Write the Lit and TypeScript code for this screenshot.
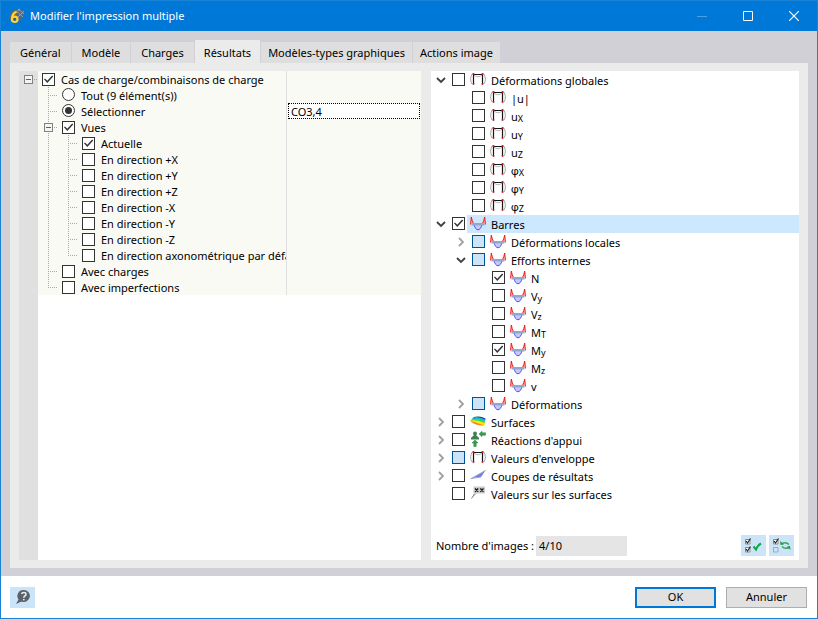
import { LitElement, html, svg, css, nothing } from "lit";
import { customElement } from "lit/decorators.js";
import { classMap } from "lit/directives/class-map.js";

type Guide = "blank" | "line" | "tee" | "end" | "root" | "branch";
type OptionRow = {
  label: string;
  guides: Guide[];
  kind?: "radio";
  checked?: boolean;
  value?: string;
};
type IconName = "frame" | "moment" | "surface" | "support" | "section" | "values";
type ResultRow = {
  label: string;
  sub?: string;
  level: number;
  icon: IconName;
  arrow?: "open" | "closed";
  state?: "on" | "partial";
  selected?: boolean;
};

const view = (label: string, last = false, checked = false): OptionRow => ({
  label,
  checked,
  guides: ["blank", "line", last ? "end" : "tee"],
});

const OPTIONS: OptionRow[] = [
  { label: "Cas de charge/combinaisons de charge", guides: ["root"], checked: true },
  { label: "Tout (9 élément(s))", guides: ["blank", "tee"], kind: "radio" },
  { label: "Sélectionner", guides: ["blank", "tee"], kind: "radio", checked: true, value: "CO3,4" },
  { label: "Vues", guides: ["blank", "branch"], checked: true },
  view("Actuelle", false, true),
  view("En direction +X"),
  view("En direction +Y"),
  view("En direction +Z"),
  view("En direction -X"),
  view("En direction -Y"),
  view("En direction -Z"),
  view("En direction axonométrique par défaut", true),
  { label: "Avec charges", guides: ["blank", "tee"] },
  { label: "Avec imperfections", guides: ["blank", "end"] },
];

const RESULTS: ResultRow[] = [
  { label: "Déformations globales", level: 0, icon: "frame", arrow: "open" },
  { label: "|u|", level: 1, icon: "frame" },
  { label: "u", sub: "X", level: 1, icon: "frame" },
  { label: "u", sub: "Y", level: 1, icon: "frame" },
  { label: "u", sub: "Z", level: 1, icon: "frame" },
  { label: "φ", sub: "X", level: 1, icon: "frame" },
  { label: "φ", sub: "Y", level: 1, icon: "frame" },
  { label: "φ", sub: "Z", level: 1, icon: "frame" },
  { label: "Barres", level: 0, icon: "moment", arrow: "open", state: "on", selected: true },
  { label: "Déformations locales", level: 1, icon: "moment", arrow: "closed", state: "partial" },
  { label: "Efforts internes", level: 1, icon: "moment", arrow: "open", state: "partial" },
  { label: "N", level: 2, icon: "moment", state: "on" },
  { label: "V", sub: "y", level: 2, icon: "moment" },
  { label: "V", sub: "z", level: 2, icon: "moment" },
  { label: "M", sub: "T", level: 2, icon: "moment" },
  { label: "M", sub: "y", level: 2, icon: "moment", state: "on" },
  { label: "M", sub: "z", level: 2, icon: "moment" },
  { label: "v", level: 2, icon: "moment" },
  { label: "Déformations", level: 1, icon: "moment", arrow: "closed", state: "partial" },
  { label: "Surfaces", level: 0, icon: "surface", arrow: "closed" },
  { label: "Réactions d'appui", level: 0, icon: "support", arrow: "closed" },
  { label: "Valeurs d'enveloppe", level: 0, icon: "frame", arrow: "closed", state: "partial" },
  { label: "Coupes de résultats", level: 0, icon: "section", arrow: "closed" },
  { label: "Valeurs sur les surfaces", level: 0, icon: "values" },
];

const TABS = ["Général", "Modèle", "Charges", "Résultats", "Modèles-types graphiques", "Actions image"];

const ICONS: Record<IconName, unknown> = {
  frame: svg`
    <path d="M2.500 2.500Q-1 8 2 13M13.500 2.500Q17 8 14 13" fill="none" stroke="#a6a6a6"/>
    <path d="M4 4Q8 7.500 12 4" fill="none" stroke="#b8b8b8"/>
    <path d="M3.500 13V3.500H12.500V13" fill="none" stroke="#161616" stroke-width="1.200"/>
    <g fill="#c81e28"><circle cx="3.500" cy="3" r="1.100"/><circle cx="12.500" cy="3" r="1.100"/><circle cx="3.500" cy="13" r="1"/><circle cx="12.500" cy="13" r="1"/></g>`,
  moment: svg`
    <path d="M4 9.500C5.500 16.500 10.500 16.500 12 9.500Z" fill="#c8c8fc" stroke="#5050ff"/>
    <path d="M.5 8.500L1.300 2L3.500 8.500ZM15.500 8.500L14.700 2L12.500 8.500Z" fill="#ffc0c0"/>
    <path d="M.6 9.500L1.300 2Q2 6 3.500 8.500M15.400 9.500L14.700 2Q14 6 12.500 8.500" fill="none" stroke="#f01818"/>
    <path d="M1.500 8H14.500V10.500H1.500Z" fill="#8fa9c9"/>`,
  surface: svg`
    <path d="M0 8L4 4Q10 2.500 15.500 5.500L14.500 12.500Q8 12.500 0 8Z" fill="#ffe600"/>
    <path d="M4 4Q10 2.500 15.500 5.500L15.200 7Q9 3.500 2.800 5Z" fill="#1438d8"/>
    <path d="M2.800 5Q9 3.500 15.200 7L14.900 8.500Q8 5 1.600 6.400Z" fill="#00b4f0"/>
    <path d="M1.600 6.400Q8 5 14.900 8.500L14.500 10Q8 6.500 .8 7.400Z" fill="#28dc50"/>
    <path d="M0 8Q4 8.500 8.500 10.500L14.500 12.500Q6 13 0 8Z" fill="#ff7a28"/>`,
  support: svg`
    <g fill="#3c8250"><circle cx="5" cy="2.500" r="2"/><path d="M5 3L9 7H1ZM1 6.500H9V8.500H1Z"/></g>
    <path d="M9 3L12 .3V1.800H15.500V4.200H12V5.700ZM5 9L8 12H6.200V15.500H3.800V12H2Z" fill="#2fa34a" stroke="#27803c" stroke-width=".5"/>`,
  section: svg`
    <path d="M2 11L15.500 3.500L11 10Z" fill="#7676f4"/>
    <path d="M.5 12L15.500 3.500M1 11.500L11 10" fill="none" stroke="#9aa4c4"/>`,
  values: svg`
    <path d="M3.500 1.500H15V8.500H7L2 13L4 8.500H3.500Z" fill="#cacaca"/>
    <path d="M5 3.500L8.200 6.700M8.200 3.500L5 6.700M10.300 3.500L13.500 6.700M13.500 3.500L10.300 6.700" stroke="#151515" stroke-width="1.300"/>
    <path d="M1.500 13.500L4.500 9" stroke="#888"/>`,
};

@customElement("app-root")
export class AppRoot extends LitElement {
  static styles = css`
    :host {
      display: flex;
      flex-direction: column;
      box-sizing: border-box;
      min-height: 100vh;
      border: 1px solid #1883d7;
      background: #fff;
      color: #000;
      font: 11px/16px "Noto Sans", "Open Sans", sans-serif;
    }
    * { box-sizing: border-box; }
    button, input { font: inherit; color: inherit; margin: 0; padding: 0; }
    button { border: 0; background: none; display: grid; place-items: center; }
    svg { display: block; flex: none; }

    .titlebar {
      display: flex;
      align-items: center;
      height: 30px;
      padding-left: 8px;
      background: #0078d7;
      color: #fff;
    }
    .title { flex: 1; margin: 0 0 0 5px; font-size: 11px; font-weight: 400; }
    .caption { width: 46px; height: 30px; }
    .faded { opacity: 0.3; }

    .body {
      flex: 1;
      display: flex;
      flex-direction: column;
      padding: 9px 9px 8px;
      background: #d1d0d6;
    }
    .tabs { display: flex; align-items: flex-end; gap: 1px; }
    .tab { height: 21px; padding: 0 10px; background: #dedede; white-space: nowrap; }
    .tab.active { height: 23px; padding: 2px 9px 0; background: #ebebeb; }
    .active ~ .tab { padding: 0 7px; }

    .panel {
      flex: 1;
      display: grid;
      grid-template-columns: minmax(0, 402fr) minmax(0, 368fr);
      gap: 10px;
      padding: 8px 9px;
      background: #ebebeb;
    }

    .options { background: linear-gradient(to right, #e0e0e0 19px, #fff 19px); }
    .option {
      display: grid;
      grid-template-columns: minmax(0, 267fr) minmax(0, 135fr);
      height: 16px;
      background: linear-gradient(to right, #e0e0e0 19px, #fafaf5 19px);
    }
    .name { display: flex; overflow: hidden; white-space: nowrap; }
    .name label { display: flex; gap: 6px; padding-left: 4px; line-height: 18px; }
    .value { border-left: 1px solid #e0e0e0; padding-left: 1px; padding-right: 1px; }
    .value input {
      display: block;
      width: 100%;
      height: 16px;
      padding: 1px 2px 0;
      border: 1px dotted #000;
      background: #fff;
      outline: 0;
    }
    .guide {
      --down: repeating-linear-gradient(to bottom, #a8a8a8 0 1px, transparent 1px 2px);
      --across: repeating-linear-gradient(to right, #a8a8a8 0 1px, transparent 1px 2px);
      flex: none;
      width: 20px;
      height: 16px;
      background-repeat: no-repeat;
    }
    .guide:first-child { width: 19px; }
    .line { background-image: var(--down); background-size: 1px 16px; background-position: right 9px top 0; }
    .tee, .branch, .end {
      background-image: var(--down), var(--across);
      background-size: 1px 16px, 10px 1px;
      background-position: right 9px top 0, right 0 top 8px;
    }
    .end { background-size: 1px 8px, 10px 1px; }
    .root {
      background-image: var(--across);
      background-size: 10px 1px;
      background-position: right 0 top 8px;
    }
    .expander {
      width: 9px;
      height: 9px;
      margin: 4px 5px 0 auto;
      border: 1px solid #808080;
      background: linear-gradient(#606060, #606060) center / 5px 1px no-repeat #f4f4f2;
    }

    .check, .radio {
      appearance: none;
      flex: none;
      display: block;
      width: 13px;
      height: 13px;
      margin-top: 2px;
      border: 1px solid #333;
      background: #fff;
    }
    .radio { margin-top: 1px; border-radius: 50%; }
    .check:checked::before {
      content: "";
      display: block;
      width: 11px;
      height: 11px;
      background: #333;
      clip-path: polygon(9% 48%, 18% 40%, 39% 62%, 83% 14%, 93% 23%, 39% 82%);
    }
    .radio:checked::before {
      content: "";
      display: block;
      width: 7px;
      height: 7px;
      margin: 2px;
      border-radius: 50%;
      background: #333;
    }
    .check:indeterminate { border-color: #005499; background: #cce4f7; }

    .results { display: flex; flex-direction: column; background: #fff; }
    .tree { flex: 1; }
    .result { display: flex; height: 18px; white-space: nowrap; }
    .indent { flex: none; width: 20px; }
    .arrow { flex: none; width: 21px; height: 18px; padding-right: 2px; }
    .result label { flex: 1; display: flex; gap: 2px; min-width: 0; }
    .entry { flex: 1; display: flex; gap: 5px; padding-left: 3px; line-height: 20px; }
    .selected .entry { background: #cce8ff; }
    .greek { font-family: Roboto, "DejaVu Sans", sans-serif; }
    .sub { font-size: 9px; position: relative; top: 1px; }

    .summary { display: flex; align-items: center; gap: 2px; padding: 0 5px 4px; }
    .count { width: 91px; height: 20px; padding: 0 3px; border: 0; background: #e5e5e5; outline: 0; }
    .space { flex: 1; }
    .tool { width: 25px; height: 21px; background: #cce4f7; }
    .tool + .tool { margin-left: 1px; }

    .footer { display: flex; align-items: center; gap: 10px; height: 42px; padding: 0 10px 0 9px; }
    .push { width: 81px; height: 21px; border: 1px solid #adadad; background: #e1e1e1; }
    .primary { border: 2px solid #0078d7; }
  `;

  private optionRow(row: OptionRow) {
    const radio = row.kind === "radio";
    return html`
      <div class="option">
        <div class="name">
          ${row.guides.map((g) => html`<span class="guide ${g}">
            ${g === "root" || g === "branch"
              ? html`<button class="expander" aria-label="Réduire ${row.label}"></button>`
              : nothing}
          </span>`)}
          <label>
            <input
              class=${radio ? "radio" : "check"}
              type=${radio ? "radio" : "checkbox"}
              name=${radio ? "charge" : nothing}
              .checked=${!!row.checked}
            />
            <span>${row.label}</span>
          </label>
        </div>
        <div class="value">
          ${row.value ? html`<input type="text" aria-label=${row.label} .value=${row.value} />` : nothing}
        </div>
      </div>`;
  }

  private arrow(row: ResultRow) {
    if (!row.arrow) return html`<span class="arrow"></span>`;
    const open = row.arrow === "open";
    return html`<button class="arrow" aria-label=${row.label} aria-expanded=${open}>
      <svg width="10" height="10" viewBox="0 0 10 10" fill="none" stroke-width="1.800">
        <path d=${open ? "M1 3L5 7L9 3" : "M3 1L7 5L3 9"} stroke=${open ? "#404040" : "#a0a0a0"} />
      </svg>
    </button>`;
  }

  private resultRow(row: ResultRow) {
    return html`
      <div class=${classMap({ result: true, selected: !!row.selected })}>
        ${Array.from({ length: row.level }, () => html`<span class="indent"></span>`)}
        ${this.arrow(row)}
        <label>
          <input
            class="check"
            type="checkbox"
            .checked=${row.state === "on"}
            .indeterminate=${row.state === "partial"}
          />
          <span class="entry">
            <svg width="16" height="16" viewBox="0 0 16 16">${ICONS[row.icon]}</svg>
            <span><span class=${row.label === "φ" ? "greek" : nothing}>${row.label}</span>${row.sub
              ? html`<span class="sub">${row.sub}</span>`
              : nothing}</span>
          </span>
        </label>
      </div>`;
  }

  render() {
    return html`
      <header class="titlebar">
        <svg width="16" height="16" viewBox="0 0 16 16">
          <path d="M3 5L6 2L11 .5L15.500 4L14 8L11.500 13L8 10Z" fill="#52667e" />
          <path d="M6 2L14 9M9 1L15 6M11 1L6 5M15 3L9 9" stroke="#9db0c4" stroke-width=".8" />
          <path d="M7.500 3.500C4 4.500 2.800 7.500 2.800 11" fill="none" stroke="#8a6a10" stroke-width="3.400" />
          <path d="M7.500 3.800C4.500 5 3 7.500 3 11" fill="none" stroke="#ffd23c" stroke-width="2.200" />
          <ellipse cx="5.700" cy="11.300" rx="2.800" ry="2.700" fill="#3b5d7c" stroke="#ffd23c" stroke-width="2.200" />
        </svg>
        <h1 class="title">Modifier l'impression multiple</h1>
        <button class="caption faded" aria-label="Réduire">
          <svg width="10" height="10" viewBox="0 0 10 10"><path d="M0 5.500H10" stroke="#fff" /></svg>
        </button>
        <button class="caption" aria-label="Agrandir">
          <svg width="10" height="10" viewBox="0 0 10 10"><path d="M.5 .5H9.500V9.500H.5Z" fill="none" stroke="#fff" /></svg>
        </button>
        <button class="caption" aria-label="Fermer">
          <svg width="10" height="10" viewBox="0 0 10 10"><path d="M0 0L10 10M10 0L0 10" stroke="#fff" stroke-width="1.200" /></svg>
        </button>
      </header>
      <main class="body">
        <nav class="tabs" role="tablist">
          ${TABS.map((t) => html`<button role="tab" aria-selected=${t === "Résultats"}
            class=${classMap({ tab: true, active: t === "Résultats" })}>${t}</button>`)}
        </nav>
        <div class="panel">
          <section class="options">${OPTIONS.map((r) => this.optionRow(r))}</section>
          <section class="results">
            <div class="tree">${RESULTS.map((r) => this.resultRow(r))}</div>
            <div class="summary">
              <label for="count">Nombre d'images :</label>
              <input id="count" class="count" type="text" readonly .value=${"4/10"} />
              <span class="space"></span>
              <button class="tool" aria-label="Tout sélectionner">
                <svg width="19" height="15" viewBox="0 0 19 15" fill="none">
                  <path d="M1.500 1.500H6V6H1.500ZM1.500 9.500H6V14H1.500Z" stroke="#888" fill="#fff" />
                  <path d="M2 3L3.500 5L6.500 .5M2 11L3.500 13L6.500 8.500" stroke="#222" stroke-width="1.200" />
                  <path d="M9.500 8.500L12 11.500Q14 7 17 5.500" stroke="#12a84a" stroke-width="2" />
                </svg>
              </button>
              <button class="tool" aria-label="Inverser la sélection">
                <svg width="19" height="15" viewBox="0 0 19 15" fill="none">
                  <path d="M1.500 1.500H6V6H1.500Z" stroke="#888" fill="#fff" />
                  <path d="M1.500 9.500H6V14H1.500Z" stroke="#9aabba" />
                  <path d="M2 3L3.500 5L6.500 .5" stroke="#222" stroke-width="1.200" />
                  <path d="M10 5.500Q14 3.500 17 6.500M17 9.500Q13 11.500 10 8.500" stroke="#3aa655" stroke-width="1.500" />
                  <path d="M8 3L8.500 7L12 6.500ZM18.500 12L18 8L15 8.500Z" fill="#2f9348" />
                </svg>
              </button>
            </div>
          </section>
        </div>
      </main>
      <footer class="footer">
        <button class="tool" aria-label="Aide">
          <svg width="16" height="16" viewBox="0 0 16 16">
            <path d="M8.500 1A6 6 0 1 1 6.500 12.500L1 15L3.500 10.500A6 6 0 0 1 8.500 1Z" fill="#5c6166" />
            <path d="M6.500 5Q7 3.500 8.800 3.500Q11 3.500 11 5.200Q11 6.300 9.800 7Q8.800 7.600 8.800 8.700" fill="none" stroke="#e4f0fa" stroke-width="1.500" />
            <circle cx="8.800" cy="10.600" r=".9" fill="#e4f0fa" />
          </svg>
        </button>
        <span class="space"></span>
        <button class="push primary">OK</button>
        <button class="push">Annuler</button>
      </footer>`;
  }
}
